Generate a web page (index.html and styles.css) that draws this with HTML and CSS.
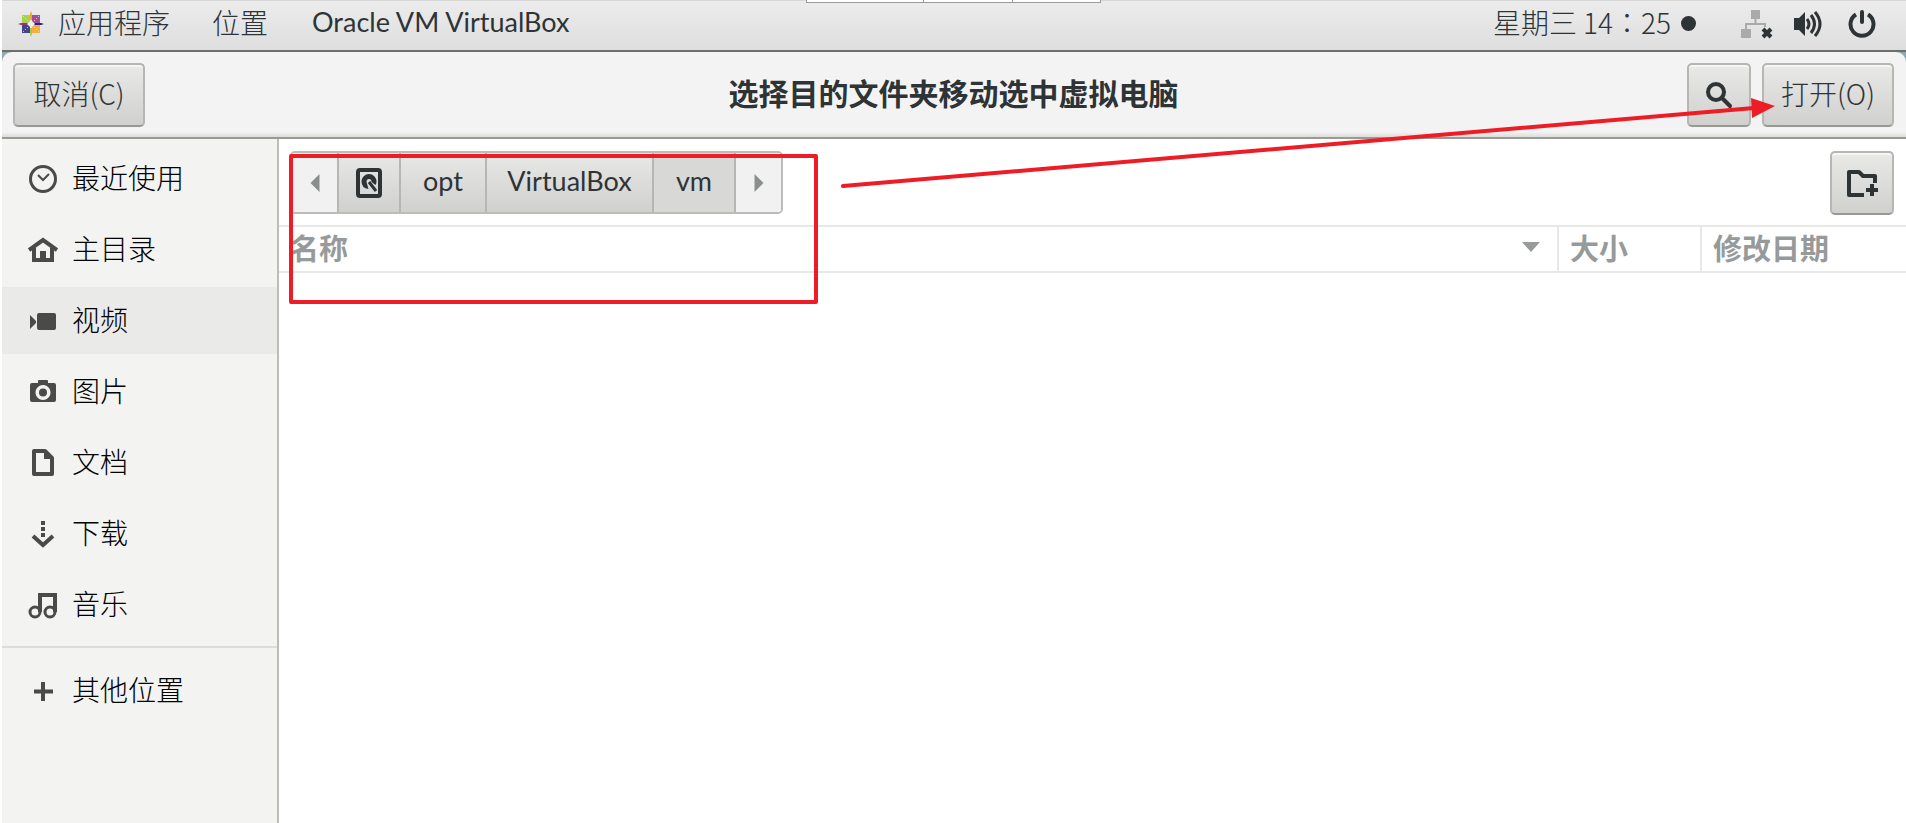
FILE: index.html
```html
<!DOCTYPE html>
<html lang="zh-CN">
<head>
<meta charset="UTF-8" />
<title>选择目的文件夹移动选中虚拟电脑</title>
<meta name="viewport" content="width=device-width, initial-scale=1" />
<link rel="stylesheet" href="styles.css">
</head>
<body>

<header class="topbar">
  <nav class="menus">
    <button class="menu" type="button">
      <svg class="logo" width="26" height="28" viewBox="0 0 26 28">
        <path fill="#a9d04f" d="M4 5h8v8H4z"/>
        <path fill="#a44c96" d="M14 5h8v8h-8z"/>
        <path fill="#45448c" d="M4 15h8v8H4z"/>
        <path fill="#f0b040" d="M14 15h8v8h-8z"/>
        <path fill="#efa724" d="M13 1l1 3v6h-2V4z"/>
        <path fill="#93358a" d="M0 14l3-1h7v2H3z"/>
        <path fill="#262577" d="M26 14l-3-1h-7v2h7z"/>
        <path fill="#a3cf3a" d="M13 27l1-3v-6h-2v6z"/>
        <path fill="#f0f0f0" d="M13 10l4 4-4 4-4-4z"/>
        <path stroke="#e8e8e8" stroke-width="1" stroke-dasharray="1 2" d="M5 6l7 7M21 6l-7 7M5 22l7-7M21 22l-7-7"/>
      </svg>
      <span>应用程序</span>
    </button>
    <button class="menu" type="button"><span>位置</span></button>
    <button class="menu latin" type="button"><span>Oracle VM VirtualBox</span></button>
  </nav>
  <div class="status">
    <span class="clock" lang="zh-TW">星期三 14：25</span>
    <span class="dot"></span>
    <svg class="net" width="32" height="30" viewBox="0 0 32 30">
      <path fill="#a9aaaa" d="M10 1h9v9h-9zM0 20h10v9H0z"/>
      <path fill="none" stroke="#a9aaaa" stroke-width="2" d="M14.500 10v5M5 21v-6h19v3"/>
      <path stroke="#2e3436" stroke-width="4" d="M22 20l8 8M30 20l-8 8"/>
    </svg>
    <svg class="vol" width="30" height="28" viewBox="0 0 30 28">
      <path fill="#2e3436" d="M1 8h5l6-6v24l-6-6H1z"/>
      <path fill="none" stroke="#2e3436" stroke-width="3" d="M14 9q4 5 0 10M18 5q7 9 0 18M22 2q10 12 0 24"/>
    </svg>
    <svg class="power" width="28" height="30" viewBox="0 0 28 30">
      <path fill="none" stroke="#2e3436" stroke-width="4" d="M8 5.500a11.500 11.500 0 1 0 12 0"/>
      <path stroke="#2e3436" stroke-width="4" stroke-linecap="round" d="M14 3v10"/>
    </svg>
  </div>
  <div class="handle"><i></i><i></i><i></i></div>
</header>

<main class="dialog">
  <div class="titlebar">
    <div class="side"><button class="btn" type="button">取消(C)</button></div>
    <h1>选择目的文件夹移动选中虚拟电脑</h1>
    <div class="side end">
      <button class="btn square" type="button" aria-label="搜索">
        <svg width="28" height="28" viewBox="0 0 28 28">
          <circle cx="11" cy="11" r="8" fill="none" stroke="#2e3436" stroke-width="4"/>
          <path stroke="#2e3436" stroke-width="4" stroke-linecap="round" d="M17 17l8 8"/>
        </svg>
      </button>
      <button class="btn" type="button">打开(O)</button>
    </div>
  </div>

  <div class="content">
    <aside class="places">
      <a href="#">
        <svg width="30" height="30" viewBox="0 0 30 30">
          <circle cx="15" cy="15" r="12.500" fill="none" stroke="#4a4a48" stroke-width="3"/>
          <path fill="none" stroke="#4a4a48" stroke-width="2" d="M10 11l5 5 6-6"/>
        </svg><span>最近使用</span></a>
      <a href="#">
        <svg width="30" height="30" viewBox="0 0 30 30">
          <path fill="none" stroke="#4a4a48" stroke-width="4" d="M1 15L15 5l14 10M6 13v12h18V13"/>
          <path fill="#4a4a48" d="M12 16h6v9h-6z"/>
        </svg><span>主目录</span></a>
      <a href="#" class="current">
        <svg width="30" height="30" viewBox="0 0 30 30">
          <path fill="#4a4a48" d="M2 9l6 6v2l-6 6z"/>
          <rect x="9" y="7" width="19" height="17" rx="2" fill="#4a4a48"/>
        </svg><span>视频</span></a>
      <a href="#">
        <svg width="30" height="30" viewBox="0 0 30 30">
          <path fill="#4a4a48" fill-rule="evenodd" d="M10 6V4q0-1 1-1h8q1 0 1 1v2h6q2 0 2 2v15q0 2-2 2H4q-2 0-2-2V8q0-2 2-2zM15 8a7.500 7.500 0 1 0 .01 0z"/>
          <circle cx="15" cy="15.500" r="4" fill="#4a4a48"/>
        </svg><span>图片</span></a>
      <a href="#">
        <svg width="30" height="30" viewBox="0 0 30 30">
          <path fill="none" stroke="#4a4a48" stroke-width="4" stroke-linejoin="round" d="M6 3h11l7 7v16H6z"/>
          <path fill="#4a4a48" d="M16 2v9h9z"/>
        </svg><span>文档</span></a>
      <a href="#">
        <svg width="30" height="30" viewBox="0 0 30 30">
          <path fill="#4a4a48" d="M13 2h4v4h-4zM13 8h4v4h-4zM13 14h4v4h-4z"/>
          <path fill="none" stroke="#4a4a48" stroke-width="4" d="M5 17l10 9 10-9"/>
        </svg><span>下载</span></a>
      <a href="#">
        <svg width="30" height="30" viewBox="0 0 30 30">
          <path fill="none" stroke="#4a4a48" stroke-width="4" d="M12 22V5h15v17"/>
          <circle cx="7" cy="22" r="5" fill="none" stroke="#4a4a48" stroke-width="3"/>
          <circle cx="22" cy="22" r="5" fill="none" stroke="#4a4a48" stroke-width="3"/>
        </svg><span>音乐</span></a>
      <a href="#" class="other">
        <svg width="30" height="30" viewBox="0 0 30 30">
          <path stroke="#4a4a48" stroke-width="4" d="M15 6v19M6 15.500h19"/>
        </svg><span>其他位置</span></a>
    </aside>

    <section class="files">
      <div class="pathrow">
        <div class="pathbar">
          <button class="arrow" type="button" aria-label="后退"><svg width="10" height="18" viewBox="0 0 10 20"><path fill="#8b8e8f" d="M10 0v20L0 10z"/></svg></button>
          <button class="disk" type="button" aria-label="文件系统">
            <svg width="26" height="30" viewBox="0 0 26 30">
              <rect x="2" y="2" width="22" height="26" rx="2" fill="none" stroke="#2e3436" stroke-width="4"/>
              <path fill="#2e3436" d="M13 6a7.500 7.500 0 0 1 7.500 7.500q0 2-1 3.500l-4-3q0-3-2.500-3t-2.500 3l2 7q-7-1-7-7.500a7.500 7.500 0 0 1 7.500-7.500z"/>
              <path stroke="#2e3436" stroke-width="3" d="M13 14l7 9"/>
            </svg>
          </button>
          <button class="opt" type="button"><span>opt</span></button>
          <button class="vbox" type="button"><span>VirtualBox</span></button>
          <button class="vm" type="button"><span>vm</span></button>
          <button class="arrow" type="button" aria-label="前进"><svg width="10" height="18" viewBox="0 0 10 20"><path fill="#8b8e8f" d="M0 0v20l10-10z"/></svg></button>
        </div>
        <button class="btn square" type="button" aria-label="新建文件夹">
          <svg width="32" height="28" viewBox="0 0 32 28">
            <path fill="none" stroke="#2e3436" stroke-width="4" stroke-linejoin="round" d="M18 26H3V3h10l4 4h12v7"/>
            <path stroke="#2e3436" stroke-width="4" d="M26 15v12M20 21h12"/>
          </svg>
        </button>
      </div>
      <table class="list">
        <thead>
          <tr>
            <th class="name"><div>名称 <svg width="18" height="10" viewBox="0 0 18 10"><path fill="#979a9a" d="M0 0h18L9 10z"/></svg></div></th>
            <th class="size">大小</th>
            <th class="date">修改日期</th>
          </tr>
        </thead>
      </table>
    </section>
  </div>
</main>

<!-- red marks drawn over the dialog -->
<div class="mark-box"></div>
<svg class="mark-arrow" width="936" height="94" viewBox="0 0 936 94">
  <path stroke="#ee1c24" stroke-width="4" stroke-linecap="round" d="M3 89L914 11"/>
  <path fill="#ee1c24" d="M911 1l24 8-23 12z"/>
</svg>

</body>
</html>
```
FILE: styles.css
```css
* {
  box-sizing: border-box;
}
body {
  margin: 0;
  min-height: 100vh;
  display: flex;
  flex-direction: column;
  position: relative;
  background: #fff;
  color: #2e3436;
  font-family: "Noto Sans CJK SC", sans-serif;
  font-size: 28px;
  font-weight: 300;
  line-height: 36px;
  padding-left: 2px;
  overflow: hidden;
}
button {
  font: inherit;
  color: inherit;
  border: none;
  background: none;
  padding: 0;
  cursor: pointer;
}
svg {
  display: block;
  flex: none;
}

/* top panel */
.topbar {
  height: 52px;
  display: flex;
  justify-content: space-between;
  position: relative;
  padding: 0 30px 4px 16px;
  background: linear-gradient(#ececec, #dedede);
  border-top: 1px solid #d6d6d6;
  border-bottom: 2px solid #6e6e6c;
}
.menus, .status, .menu {
  display: flex;
  align-items: center;
}
.menus {
  gap: 42px;
}
.menu {
  gap: 14px;
}
.menu span, .clock {
  padding-bottom: 3px;
}
.latin {
  padding-left: 2px;
  font-family: Lato, sans-serif;
  font-size: 27px;
  font-weight: 400;
}
.clock {
  font-family: "Noto Sans CJK TC", sans-serif;
}
.dot {
  width: 15px;
  height: 15px;
  margin-left: 10px;
  border-radius: 50%;
  background: #2e3436;
}
.net {
  margin-left: 45px;
}
.vol {
  margin-left: 20px;
}
.power {
  margin-left: 25px;
}
.handle {
  position: absolute;
  top: -1px;
  left: 804px;
  width: 295px;
  height: 3px;
  display: flex;
  background: #fff;
  border: 1px solid #9a9a9a;
  border-top: none;
}
.handle i {
  flex: 1;
  border-right: 1px solid #9a9a9a;
}
.handle i:first-child {
  flex: 0 0 117px;
}
.handle i:last-child {
  border: none;
}

/* dialog */
.dialog {
  flex: 1;
  display: flex;
  flex-direction: column;
  background: #8fa9b3;
}
.titlebar {
  height: 87px;
  display: flex;
  align-items: center;
  padding: 0 12px 0 11px;
  background: linear-gradient(#f3f3f3 94%, #dcdcda);
  border-bottom: 2px solid #9a9a95;
  border-radius: 10px 10px 0 0;
}
.titlebar h1 {
  margin: 0;
  padding-bottom: 5px;
  font-size: 30px;
  line-height: 36px;
  font-weight: 700;
}
.side {
  flex: 1;
  display: flex;
  gap: 11px;
}
.end {
  justify-content: flex-end;
}
.btn {
  min-width: 132px;
  height: 64px;
  padding-bottom: 4px;
  border: 2px solid #b6b6b3;
  border-bottom-color: #999994;
  border-radius: 5px;
  background: linear-gradient(#e9e9e7, #d0d0ce);
  box-shadow: inset 0 2px #f6f6f5;
}
.square {
  width: 64px;
  min-width: 0;
  padding: 0;
  display: flex;
  align-items: center;
  justify-content: center;
}
.content {
  flex: 1;
  display: flex;
  background: #fff;
}

/* places sidebar */
.places {
  width: 277px;
  padding-top: 6px;
  background: #f3f3f1;
  border-right: 2px solid #bdbdb7;
}
.places a {
  height: 67px;
  margin-bottom: 4px;
  display: flex;
  align-items: center;
  gap: 14px;
  padding-left: 26px;
  color: #000;
  text-decoration: none;
}
.places span {
  padding-bottom: 4px;
}
.places .current {
  background: #eaeae8;
}
.places .other {
  height: 88px;
  margin-top: 8px;
  border-top: 2px solid #dcdcda;
}

/* file list */
.files {
  flex: 1;
}
.pathrow {
  display: flex;
  justify-content: space-between;
  padding: 12px 12px 10px 11px;
}
.pathbar {
  height: 63px;
  display: flex;
  border: 2px solid #bcbcb8;
  border-radius: 5px;
  overflow: hidden;
  font-family: Lato, sans-serif;
  font-size: 27px;
  font-weight: 400;
}
.pathbar button {
  display: flex;
  align-items: center;
  justify-content: center;
  background: linear-gradient(#e8e8e6, #d0d0ce);
  border-right: 2px solid #b6b6b3;
}
.pathbar span {
  padding-bottom: 3px;
}
.pathbar .arrow {
  width: 47px;
  background: #f1f1f1;
}
.pathbar .arrow:last-child {
  width: 45px;
  border: none;
}
.pathbar .disk {
  width: 62px;
}
.pathbar .opt {
  width: 86px;
}
.pathbar .vbox {
  width: 167px;
}
.pathbar .vm {
  width: 82px;
  background: #d8d8d6;
}
.list {
  width: 100%;
  border-collapse: separate;
  border-spacing: 0;
  table-layout: fixed;
}
.list th {
  height: 48px;
  padding: 0 0 4px 11px;
  text-align: left;
  color: #979a9a;
  font-size: 29px;
  line-height: 36px;
  font-weight: 700;
  border: solid #e8e8e7;
  border-width: 2px 2px 2px 0;
}
.list th:last-child {
  border-right: none;
}
.list div {
  display: flex;
  align-items: center;
  justify-content: space-between;
  padding-right: 17px;
}
.list .size {
  width: 143px;
}
.list .date {
  width: 204px;
}

/* red marks */
.mark-box {
  position: absolute;
  left: 289px;
  top: 154px;
  width: 529px;
  height: 150px;
  border: 4px solid #ee1c24;
  border-radius: 2px;
}
.mark-arrow {
  position: absolute;
  left: 840px;
  top: 97px;
}
```
